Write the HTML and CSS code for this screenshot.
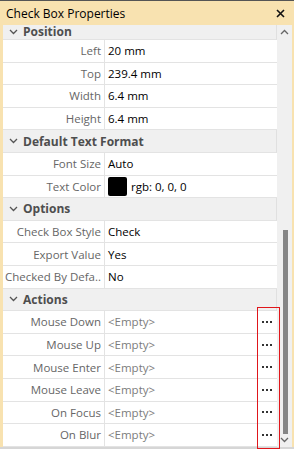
FILE: index.html
```html
<!DOCTYPE html>
<html lang="en">
<head>
    <meta charset="UTF-8">
    <meta name="viewport" content="width=device-width, initial-scale=1.0">
    <title>Check Box Properties</title>
    <link rel="stylesheet" href="styles.css">
</head>
<body>
    <div class="panel">
        <div class="titlebar">
            <span class="title">Check Box Properties</span>
            <svg class="close" width="9" height="9" viewBox="0 0 9 9">
                <path d="M1 1 L8 8 M8 1 L1 8" stroke="#111" stroke-width="1.6"/>
            </svg>
        </div>
        <div class="body">
            <div class="viewport">
                <div class="grid">
                    <div class="section first">
                        <svg class="chev" width="9" height="6" viewBox="0 0 9 6"><path d="M1 1 L4.5 4.5 L8 1" fill="none" stroke="#555" stroke-width="1.3"/></svg>
                        <span>Position</span>
                    </div>
                    <div class="row"><div class="label">Left</div><div class="value">20 mm</div></div>
                    <div class="row"><div class="label">Top</div><div class="value">239.4 mm</div></div>
                    <div class="row"><div class="label">Width</div><div class="value">6.4 mm</div></div>
                    <div class="row"><div class="label">Height</div><div class="value">6.4 mm</div></div>

                    <div class="section">
                        <svg class="chev" width="9" height="6" viewBox="0 0 9 6"><path d="M1 1 L4.5 4.5 L8 1" fill="none" stroke="#555" stroke-width="1.3"/></svg>
                        <span>Default Text Format</span>
                    </div>
                    <div class="row"><div class="label">Font Size</div><div class="value">Auto</div></div>
                    <div class="row"><div class="label">Text Color</div><div class="value"><span class="swatch"></span>rgb: 0, 0, 0</div></div>

                    <div class="section">
                        <svg class="chev" width="9" height="6" viewBox="0 0 9 6"><path d="M1 1 L4.5 4.5 L8 1" fill="none" stroke="#555" stroke-width="1.3"/></svg>
                        <span>Options</span>
                    </div>
                    <div class="row"><div class="label">Check Box Style</div><div class="value">Check</div></div>
                    <div class="row"><div class="label">Export Value</div><div class="value">Yes</div></div>
                    <div class="row"><div class="label">Checked By Defa..</div><div class="value">No</div></div>

                    <div class="section">
                        <svg class="chev" width="9" height="6" viewBox="0 0 9 6"><path d="M1 1 L4.5 4.5 L8 1" fill="none" stroke="#555" stroke-width="1.3"/></svg>
                        <span>Actions</span>
                    </div>
                    <div class="row"><div class="label">Mouse Down</div><div class="value action"><span class="empty">&lt;Empty&gt;</span><span class="more"><i></i><i></i><i></i></span></div></div>
                    <div class="row"><div class="label">Mouse Up</div><div class="value action"><span class="empty">&lt;Empty&gt;</span><span class="more"><i></i><i></i><i></i></span></div></div>
                    <div class="row"><div class="label">Mouse Enter</div><div class="value action"><span class="empty">&lt;Empty&gt;</span><span class="more"><i></i><i></i><i></i></span></div></div>
                    <div class="row"><div class="label">Mouse Leave</div><div class="value action"><span class="empty">&lt;Empty&gt;</span><span class="more"><i></i><i></i><i></i></span></div></div>
                    <div class="row"><div class="label">On Focus</div><div class="value action"><span class="empty">&lt;Empty&gt;</span><span class="more"><i></i><i></i><i></i></span></div></div>
                    <div class="row"><div class="label">On Blur</div><div class="value action"><span class="empty">&lt;Empty&gt;</span><span class="more"><i></i><i></i><i></i></span></div></div>
                </div>
            </div>
            <div class="scrollbar">
                <svg class="arrow" width="9" height="6" viewBox="0 0 9 6"><path d="M1 5 L4.5 1.5 L8 5" fill="none" stroke="#666" stroke-width="1.3"/></svg>
                <div class="track"><div class="thumb"></div></div>
                <svg class="arrow" width="9" height="6" viewBox="0 0 9 6"><path d="M1 1 L4.5 4.5 L8 1" fill="none" stroke="#666" stroke-width="1.3"/></svg>
            </div>
        </div>
        <div class="mark"></div>
    </div>
</body>
</html>
```

FILE: styles.css
```css
* {
    margin: 0;
    padding: 0;
    box-sizing: border-box;
}

body {
    width: 294px;
    height: 449px;
    overflow: hidden;
    font-family: "Open Sans", "Noto Sans", sans-serif;
    font-size: 11.5px;
    color: #000;
}

.panel {
    position: relative;
    height: 449px;
    display: flex;
    flex-direction: column;
    background-color: #f8e2b0;
    border-top: 1px solid #555;
    border-bottom: 2px solid #d6d6d6;
}

.titlebar {
    height: 24px;
    flex: none;
    display: flex;
    align-items: center;
    justify-content: space-between;
    padding: 0 9px 0 6px;
}

.title {
    font-size: 12px;
}

.body {
    flex: 1;
    min-height: 0;
    display: flex;
    margin: 0 2px 0 3px;
    background-color: #fff;
}

.viewport {
    flex: 1;
}

.grid {
    display: flex;
    flex-direction: column;
}

.section, .row {
    height: 22.6px;
    flex: none;
    border-bottom: 1px solid #e3e3e3;
}

.section {
    display: flex;
    align-items: center;
    gap: 5px;
    padding-left: 6px;
    background-color: #f0f0f0;
    border-right: 1px solid #e0e0e0;
    color: #4e4e4e;
    font-weight: bold;
    font-size: 12px;
}

/* list is scrolled down a little, only the lower part of this header shows */
.section.first {
    height: 15px;
    line-height: 14px;
}

.chev {
    flex: none;
}

.row {
    display: grid;
    grid-template-columns: 102px 1fr;
}

.label {
    display: flex;
    align-items: center;
    justify-content: flex-end;
    padding-right: 3px;
    border-right: 1px solid #e3e3e3;
    color: #666;
    white-space: nowrap;
    overflow: hidden;
}

.value {
    display: flex;
    align-items: center;
    padding-left: 3px;
    white-space: nowrap;
}

.swatch {
    width: 19px;
    height: 19px;
    border-radius: 2px;
    background-color: #000;
    margin-right: 4px;
}

.action {
    justify-content: space-between;
}

.empty {
    color: #7c7c7c;
}

.more {
    width: 21px;
    display: flex;
    justify-content: center;
    gap: 2px;
}

.more i {
    width: 2px;
    height: 2px;
    background-color: #333;
}

.scrollbar {
    width: 15px;
    flex: none;
    display: flex;
    flex-direction: column;
    align-items: center;
    background-color: #f0f0f0;
    padding: 4px 0 4px;
}

.arrow {
    flex: none;
}

.track {
    flex: 1;
    width: 100%;
    display: flex;
    flex-direction: column;
    justify-content: flex-end;
    align-items: center;
    padding: 0 0 3px 1px;
}

.thumb {
    width: 5px;
    height: 204px;
    background-color: #868686;
}

.mark {
    position: absolute;
    left: 257px;
    top: 306px;
    width: 23px;
    height: 142px;
    border: 1px solid #e0161b;
}
```
